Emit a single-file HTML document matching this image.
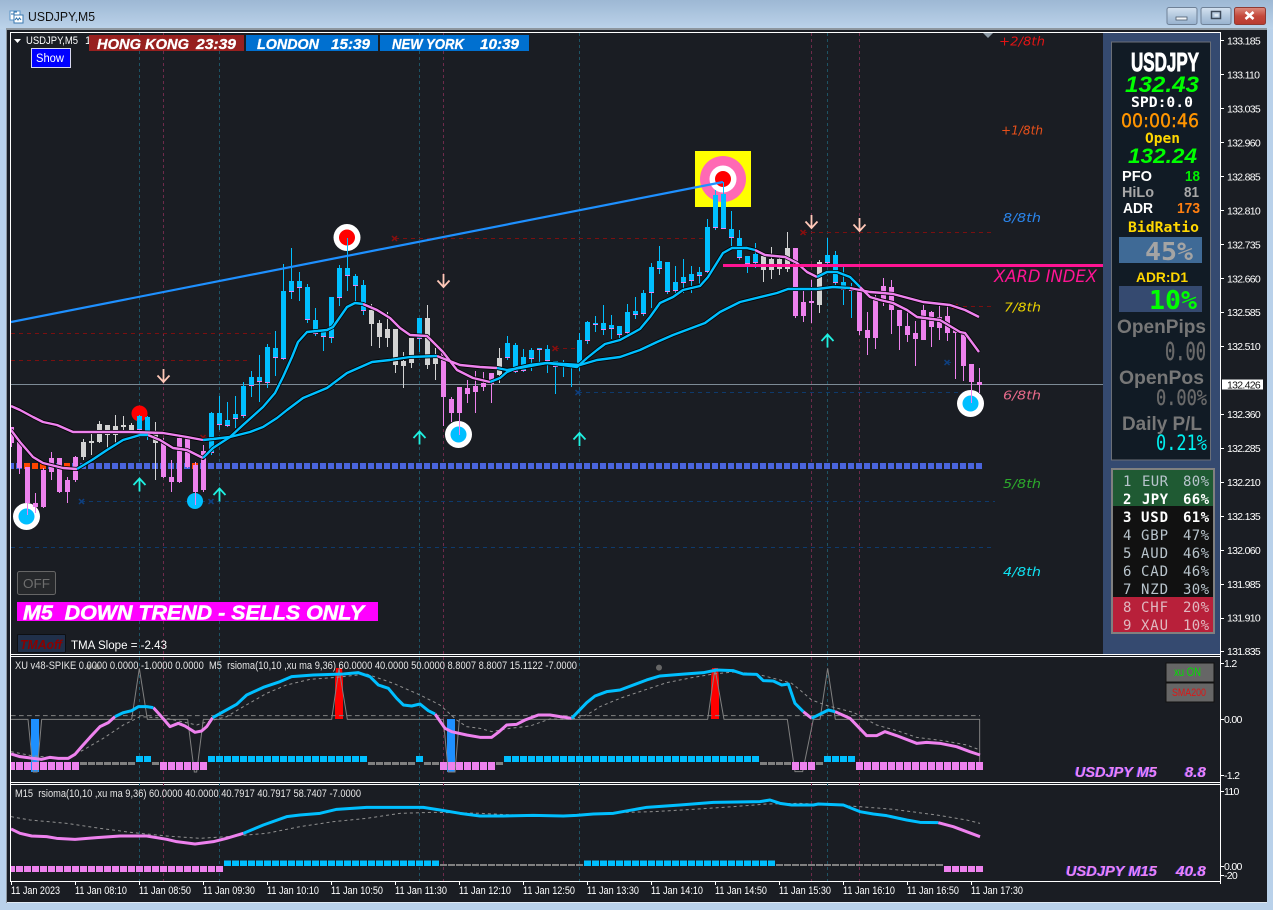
<!DOCTYPE html>
<html><head><meta charset="utf-8"><title>USDJPY,M5</title>
<style>
html,body{margin:0;padding:0;background:#b9d1ea;overflow:hidden}
svg{display:block}
text{font-family:"Liberation Sans",sans-serif;white-space:pre}
.ax{font-size:11px;fill:#fff}
.ay{font-size:10.5px;fill:#fff;letter-spacing:-.7px}
.mono{font-family:"DejaVu Sans Mono","Liberation Mono",monospace}
.dj{font-family:"DejaVu Sans",sans-serif}
.bi{font-weight:bold;font-style:italic}
.b{font-weight:bold}
.lv{font-family:"DejaVu Sans",sans-serif;font-style:italic;font-size:12.5px}
.cu{font-family:"DejaVu Sans Mono","Liberation Mono",monospace;font-size:14px;fill:#b8c4cc}
.cb{font-family:"DejaVu Sans Mono","Liberation Mono",monospace;font-size:14px;fill:#fff;font-weight:bold}
.vio{font-weight:bold;font-style:italic;font-size:15px;fill:#ee82ee;filter:drop-shadow(-1px 0 0 #3a3ae0)}
</style></head><body>
<svg xmlns="http://www.w3.org/2000/svg" width="1273" height="910" viewBox="0 0 1273 910">
<defs>
<linearGradient id="tb" x1="0" y1="0" x2="0" y2="1"><stop offset="0" stop-color="#9db8d4"/><stop offset="1" stop-color="#bcd3ea"/></linearGradient>
<linearGradient id="wb" x1="0" y1="0" x2="0" y2="1"><stop offset="0" stop-color="#d5e2f0"/><stop offset=".5" stop-color="#b3c8de"/><stop offset="1" stop-color="#98b2cf"/></linearGradient>
<linearGradient id="wr" x1="0" y1="0" x2="0" y2="1"><stop offset="0" stop-color="#dd8d80"/><stop offset=".5" stop-color="#c4493c"/><stop offset="1" stop-color="#b83a30"/></linearGradient>
<clipPath id="cp"><rect x="11" y="33" width="1209" height="848"/></clipPath>
</defs>

<!-- window frame -->
<rect width="1273" height="910" fill="#b9d1ea"/>
<rect width="1273" height="29" fill="url(#tb)"/>
<rect x="6" y="28" width="1261" height="875" fill="#8e979f"/>
<rect x="7" y="30" width="1260" height="872" fill="#1a1d23"/>
<rect x="7" y="902" width="1260" height="1" fill="#dfe9f3"/>
<!-- title icon -->
<rect x="10" y="11" width="10" height="9" fill="#fff" stroke="#5a95c8"/>
<rect x="14" y="15" width="9" height="8" fill="#fff" stroke="#3a78b0"/>
<path d="M11 14h3v-2h3M15 20l1.5-2 1.5 2 1.5-2 1.5 2" fill="none" stroke="#2a6ea8"/>
<text x="28" y="21" style="font-size:12.5px" fill="#111" textLength="67" lengthAdjust="spacingAndGlyphs">USDJPY,M5</text>
<!-- window buttons -->
<rect x="1167" y="7.5" width="30" height="17" rx="2" fill="url(#wb)" stroke="#6f8197"/>
<rect x="1176" y="17" width="11" height="3" fill="#f2f5f8" stroke="#4a5a6c" stroke-width=".8"/>
<rect x="1201" y="7.5" width="30" height="17" rx="2" fill="url(#wb)" stroke="#6f8197"/>
<rect x="1211.5" y="11.5" width="9" height="7" fill="none" stroke="#3d4a5a" stroke-width="1.5"/>
<rect x="1214.5" y="14" width="4" height="2.5" fill="#dfe8f1"/>
<rect x="1234.5" y="7.5" width="31" height="17" rx="2" fill="url(#wr)" stroke="#8f3a32"/>
<path d="M1245.5 12l8 7M1253.5 12l-8 7" stroke="#fff" stroke-width="2.6"/>

<!-- frames -->
<path d="M10.5 32V881.5M10 32.500H1221M1220.5 32V884M10 654.5H1221M10 656.5H1221M10 782.5H1221M10 784.5H1221M10 881.5H1221" stroke="#fff" fill="none"/>

<g clip-path="url(#cp)">
<!-- vertical separators -->
<path d="M139.5 33V881M219.5 33V881M419.5 33V881M579.5 33V881M827.5 33V881" stroke="#1d5364" stroke-dasharray="3 3"/>
<path d="M163.5 33V881M443.5 33V881M811.5 33V881M859.5 33V881" stroke="#6d2a4a" stroke-dasharray="3 3"/>

<!-- levels -->
<path d="M395 238.5H706M803 232.5H992M955 306.5H993M555 348.5H580M11 333.5H276M11 360.5H250M203 437.5H215" stroke="#7a1010" stroke-dasharray="4 4" fill="none"/>
<path d="M578 392.5H975M81 501.5H995M11 547.5H993M947 362.5H955" stroke="#0e3a6c" stroke-dasharray="4 4" fill="none"/>
<path d="M392 236l5 5M397 236l-5 5M800.5 230l5 5M805.5 230l-5 5M952.5 304l5 5M957.5 304l-5 5M552.5 346l5 5M557.5 346l-5 5M200.5 435l5 5M205.5 435l-5 5" stroke="#8b0e0e" stroke-width="1.5"/>
<path d="M79 499l5 5M84 499l-5 5M208.5 499l5 5M213.5 499l-5 5M575.5 390l5 5M580.5 390l-5 5M944.5 360l5 5M949.5 360l-5 5" stroke="#0e3f80" stroke-width="1.5"/>

<!-- price line -->
<path d="M11 384.5H1220" stroke="#7d8b96"/>

<!-- blue dotted -->
<path d="M8 466H983" stroke="#4a64dc" stroke-width="6" stroke-dasharray="6 2"/>
<path d="M24 466H46M64 466H70M192 466H198" stroke="#ff4500" stroke-width="6" stroke-dasharray="6 2"/>

<!-- target and rings -->
<rect x="695" y="151" width="56" height="56" fill="#ffff00"/>
<circle cx="723" cy="179" r="23" fill="#ff69b4"/>
<circle cx="723" cy="179" r="13.5" fill="#fff"/>
<circle cx="723" cy="179" r="8" fill="#f00"/>
<circle cx="347" cy="237.5" r="13.5" fill="#fff"/><circle cx="347" cy="237.5" r="8" fill="#f00"/>
<circle cx="458.5" cy="434.5" r="13.5" fill="#fff"/><circle cx="458.5" cy="434.5" r="8" fill="#00bfff"/>
<circle cx="970.5" cy="403.5" r="13.5" fill="#fff"/><circle cx="970.5" cy="403.5" r="8" fill="#00bfff"/>
<circle cx="26.5" cy="516.5" r="13.5" fill="#fff"/><circle cx="26.5" cy="516.5" r="8" fill="#00bfff"/>
<circle cx="195" cy="501" r="8" fill="#00bfff"/>
<circle cx="139.5" cy="413.5" r="8" fill="#f00"/>

<!-- blue candles -->
<path fill="none" stroke="#00bfff" d="M139.5 415V431M147.5 416V440M211.5 412V455M219.5 396V430M227.5 402V427M235.5 396V428M243.5 382V418M251.5 371V397M259.5 355V402M267.5 344V388M275.5 331V376M283.5 264V360M291.5 248V299M299.5 272V301M307.5 284V323M315.5 308V336M323.5 330V351M331.5 297V343M339.5 265V306M347.5 238V291M355.5 274V303M363.5 280V315M419.5 318V352M507.5 336V360M515.5 343V373M523.5 349V372M531.5 348V371M539.5 348V365M547.5 345V373M555.5 361V394M563.5 360V377M571.5 364V387M579.5 333V371M587.5 321V344M595.5 316V332M603.5 305V335M611.5 315V339M619.5 326V341M627.5 304V335M635.5 297V319M643.5 290V316M651.5 263V308M659.5 246V274M667.5 262V294M675.5 266V296M683.5 259V293M691.5 266V293M699.5 267V286M707.5 219V273M715.5 190V230M723.5 182V229M731.5 211V247M739.5 230V260M747.5 256V273M755.5 243V268M827.5 238V266M835.5 251V285M843.5 265V305M851.5 283V318"/>
<path fill="none" stroke="#00bfff" stroke-width="5" d="M139.5 416V430M147.5 417V432M211.5 413V453M219.5 413V425M227.5 420V426M235.5 414V419M243.5 386V416M251.5 377V386M259.5 377V382M267.5 347V383M275.5 348V358M283.5 291V359M291.5 281V292M299.5 281V288M307.5 287V320M315.5 320V334M323.5 331V337M331.5 297V338M339.5 268V298M347.5 268V276M355.5 276V286M363.5 285V311M419.5 318V339M507.5 343V358M515.5 345V372M523.5 357V371M531.5 350V359M539.5 348V350M547.5 349V361M555.5 361V367M563.5 365V366M571.5 364V366M579.5 340V365M587.5 322V341M595.5 323V325M603.5 323V330M611.5 325V329M619.5 326V335M627.5 312V333M635.5 311V315M643.5 293V314M651.5 267V293M659.5 261V269M667.5 262V292M675.5 282V291M683.5 277V283M691.5 274V281M699.5 272V276M707.5 227V272M715.5 195V228M723.5 194V229M731.5 229V238M739.5 238V258M747.5 256V264M755.5 254V263M827.5 255V263M835.5 255V283M843.5 282V290M851.5 289V291"/>
<path fill="none" stroke="#ee82ee" d="M137 429.5h5M145 431.5h5M209 452.5h5M217 424.5h5M225 425.5h5M233 418.5h5M241 415.5h5M249 385.5h5M257 381.5h5M265 382.5h5M273 357.5h5M281 358.5h5M289 291.5h5M297 287.5h5M305 319.5h5M313 333.5h5M321 336.5h5M329 337.5h5M337 297.5h5M345 275.5h5M353 285.5h5M361 310.5h5M417 338.5h5M505 357.5h5M513 371.5h5M521 370.5h5M529 358.5h5M537 349.5h5M545 360.5h5M553 366.5h5M561 365.5h5M569 365.5h5M577 364.5h5M585 340.5h5M593 324.5h5M601 329.5h5M609 328.5h5M617 334.5h5M625 332.5h5M633 314.5h5M641 313.5h5M649 292.5h5M657 268.5h5M665 291.5h5M673 290.5h5M681 282.5h5M689 280.5h5M697 275.5h5M705 271.5h5M713 227.5h5M721 228.5h5M729 237.5h5M737 257.5h5M745 263.5h5M753 262.5h5M825 262.5h5M833 282.5h5M841 289.5h5M849 290.5h5"/>

<!-- gray candles -->
<path fill="none" stroke="#d3d3d3" d="M83.5 439V460M91.5 432V455M99.5 421V443M107.5 425V448M115.5 415V443M123.5 416V432M131.5 423V433M155.5 422V480M371.5 304V346M379.5 320V348M387.5 312V347M395.5 329V373M403.5 352V388M411.5 338V368M427.5 305V369M435.5 348V380M499.5 348V383M763.5 256V282M771.5 247V279M779.5 255V275M787.5 232V272M819.5 260V313"/>
<path fill="none" stroke="#d3d3d3" stroke-width="5" d="M83.5 442V457M91.5 441V443M99.5 424V442M107.5 425V435M115.5 426V435M123.5 425V427M131.5 425V432M155.5 432V443M371.5 310V324M379.5 323V337M387.5 329V338M395.5 329V365M403.5 361V366M411.5 338V363M427.5 318V365M435.5 358V364M499.5 358V375M763.5 256V270M771.5 259V270M779.5 259V269M787.5 248V269M819.5 262V305"/>

<!-- pink candles -->
<path fill="none" stroke="#ee82ee" d="M11.5 427V447M19.5 442V474M27.5 467V515M35.5 493V513M43.5 468V508M51.5 452V480M59.5 458V493M67.5 477V503M75.5 456V482M163.5 438V478M171.5 460V492M179.5 437V483M187.5 437V468M195.5 462V505M203.5 445V492M443.5 350V426M451.5 397V422M459.5 387V435M467.5 380V403M475.5 371V413M483.5 372V391M491.5 373V403M795.5 248V318M803.5 290V322M811.5 280V323M859.5 291V335M867.5 312V355M875.5 295V349M883.5 278V306M891.5 280V334M899.5 310V350M907.5 310V342M915.5 321V366M923.5 305V340M931.5 311V347M939.5 306V340M947.5 305V341M955.5 328V379M963.5 331V381M971.5 364V403M979.5 368V393"/>
<path fill="none" stroke="#ee82ee" stroke-width="5" d="M11.5 427V443M19.5 442V468M27.5 467V503M35.5 503V507M43.5 470V507M51.5 458V472M59.5 458V492M67.5 480V492M75.5 457V480M163.5 443V477M171.5 477V482M179.5 438V482M187.5 438V467M195.5 465V492M203.5 451V490M443.5 352V397M451.5 399V413M459.5 387V413M467.5 388V394M475.5 386V392M483.5 383V387M491.5 373V384M795.5 248V316M803.5 302V316M811.5 301V303M859.5 291V331M867.5 330V338M875.5 299V338M883.5 286V302M891.5 287V310M899.5 310V326M907.5 326V335M915.5 333V339M923.5 310V340M931.5 312V327M939.5 317V328M947.5 316V333M955.5 330V333M963.5 331V366M971.5 364V382M979.5 382V385"/>

<!-- MA casing -->
<g fill="none" stroke="#000" stroke-width="4" stroke-linejoin="round">
<polyline points="11,430 20,442 33,457 43,463 63,468 77,469 92,460 107,450 123,440 140,435 148,435 160,440 173,448 187,450 203,458 213,448 230,437 243,425 263,407 275,393 283,377 292,357 298,342 307,332 327,330 333,327 347,307 355,303 363,304 377,310 390,318 400,328 410,335 427,336 443,352 457,370 473,378 490,382 500,378 507,372 517,368 530,365 547,363 563,365 577,367 587,358 597,350 605,344 620,340 640,329 650,317 660,303 673,297 683,290 700,286 708,277 723,253 732,248 747,248 755,250 765,255 785,257 797,263 807,272 817,277 827,272 837,272 850,277 860,287 870,297 880,300 893,303 907,310 917,317 940,320 960,332 965,333 979,352"/>
<polyline points="11,406 20,410 33,417 43,422 57,425 73,432 100,432 131,432 163,433 187,437 203,440 213,439 230,437 250,432 263,427 277,418 287,410 303,398 327,388 347,373 372,362 390,360 410,357 437,356 447,360 460,365 480,367 497,368 507,370 520,368 547,363 580,365 597,360 620,357 640,350 657,342 673,335 705,323 720,312 740,302 777,293 788,289 817,289 833,287 850,288 860,290 870,292 883,293 893,294 923,302 950,305 965,310 979,317"/>
</g>
<!-- MA colours -->
<g fill="none" stroke="#ee82ee" stroke-width="2.4" stroke-linejoin="round">
<polyline points="11,430 20,442 33,457 43,463 63,468 77,469"/>
<polyline points="148,435 160,440 173,448 187,450 203,458"/>
<polyline points="363,304 377,310 390,318 400,328 410,335 427,336 443,352 457,370 473,378 490,382"/>
<polyline points="755,250 765,255 785,257 797,263 807,272 817,277"/>
<polyline points="860,287 870,297 880,300 893,303 907,310 917,317 940,320 960,332 965,333 979,352"/>
<polyline points="11,406 20,410 33,417 43,422 57,425 73,432 100,432 131,432 163,433 187,437 203,440"/>
<polyline points="437,356 447,360 460,365 480,367 497,368"/>
<polyline points="850,288 860,290 870,292 883,293 893,294 923,302 950,305 965,310 979,317"/>
</g>
<g fill="none" stroke="#00bfff" stroke-width="2.4" stroke-linejoin="round">
<polyline points="77,469 92,460 107,450 123,440 140,435 148,435"/>
<polyline points="203,458 213,448 230,437 243,425 263,407 275,393 283,377 292,357 298,342 307,332 327,330 333,327 347,307 355,303 363,304"/>
<polyline points="490,382 500,378 507,372 517,368 530,365 547,363 563,365 577,367 587,358 597,350 605,344 620,340 640,329 650,317 660,303 673,297 683,290 700,286 708,277 723,253 732,248 747,248 755,250"/>
<polyline points="817,277 827,272 837,272 850,277 860,287"/>
<polyline points="203,440 213,439 230,437 250,432 263,427 277,418 287,410 303,398 327,388 347,373 372,362 390,360 410,357 437,356"/>
<polyline points="497,368 507,370 520,368 547,363 580,365 597,360 620,357 640,350 657,342 673,335 705,323 720,312 740,302 777,293 788,289 817,289 833,287 850,288"/>
</g>

<!-- pink XARD line + trend -->
<path d="M723 265.5H1103" stroke="#ff1493" stroke-width="3"/>
<path d="M11 322L723 182" stroke="#1e90ff" stroke-width="2.2"/>

<!-- arrows -->
<g fill="none" stroke="#1ff0e0" stroke-width="1.8">
<path d="M133.5 485L139.5 478.5L145.5 485M139.5 479V491.5"/>
<path d="M213.5 495L219.5 488.5L225.5 495M219.5 489V501.5"/>
<path d="M413.5 438L419.5 431.5L425.5 438M419.5 432V444.5"/>
<path d="M573.5 439.5L579.5 433L585.5 439.5M579.5 433.5V446"/>
<path d="M821.5 341L827.5 334.5L833.5 341M827.5 335V347.5"/>
</g>
<g fill="none" stroke="#ffc8b8" stroke-width="1.8">
<path d="M157.5 375.5L163.5 382L169.5 375.5M163.5 381.5V369"/>
<path d="M437.5 280.5L443.5 287L449.5 280.5M443.5 286.5V274"/>
<path d="M805.5 221.5L811.5 228L817.5 221.5M811.5 227.5V215"/>
<path d="M853.5 224.5L859.5 231L865.5 224.5M859.5 230.5V218"/>
</g>
<path d="M983 33h10l-5 5z" fill="#8e9ba6"/>

<!-- sub 1 -->
<path d="M31 719h8v53h-8zM447 719h8v53h-8z" fill="#1e90ff"/>
<path d="M335 719V680L336 668H342L343 680V719zM711 719V680L712 668H718L719 680V719z" fill="#f00"/>
<g transform="scale(.33333)" fill="none">
<path d="M33 2147H2940" stroke="#808080" stroke-width="3" stroke-dasharray="14 10"/>
<path d="M33 2158H84L100 2316H111L125 2158H395L418 2005L442 2158H563L583 2316H590L610 2158H995L1017 2005L1042 2158H1330L1345 2316H1365L1378 2158H2123L2145 2005L2172 2158H2362L2385 2315H2408L2440 2158H2460L2483 2005L2506 2158H2939V2310" stroke="#808080" stroke-width="3"/>
<circle cx="267" cy="2001" r="9" fill="#555"/><circle cx="291" cy="2001" r="9" fill="#555"/><circle cx="1977" cy="2003" r="9" fill="#666"/>
<g transform="translate(0 1950)">
<polyline stroke="#909090" stroke-width="3" stroke-dasharray="9 9" points="33,305 100,318 200,325 250,300 310,265 370,225 420,200 500,205 590,225 640,210 680,200 730,170 800,130 860,105 930,88 1010,82 1100,72 1180,100 1260,135 1320,165 1370,210 1400,230 1440,235 1475,245 1530,235 1590,228 1650,207 1715,208 1760,195 1800,170 1860,145 1940,118 2000,98 2080,82 2140,72 2200,66 2270,72 2340,90 2375,100 2400,120 2435,150 2485,168 2560,187 2630,225 2700,245 2750,262 2830,272 2900,285 2940,300"/>
<g stroke="#ee82ee" stroke-width="9" stroke-linejoin="round">
<polyline points="33,312 60,320 100,325 125,328 150,322 175,325 205,325 225,313 245,290 270,262 300,230 325,218 345,200"/>
<polyline points="460,173 480,195 510,230 535,220 555,228 585,247 605,243 620,230 638,203"/>
<polyline points="1305,192 1335,235 1355,245 1400,255 1440,262 1475,262 1495,247 1520,225 1550,223 1575,210 1615,195 1650,195 1680,200 1715,205"/>
<polyline points="2410,185 2435,205"/>
<polyline points="2505,185 2550,205 2600,257 2630,257 2655,245 2690,257 2750,280 2780,277 2820,280 2870,290 2910,305 2940,315"/>
</g>
<g stroke="#00bfff" stroke-width="9" stroke-linejoin="round">
<polyline points="345,200 370,188 395,182 415,170 440,170 460,173"/>
<polyline points="638,203 670,185 710,163 740,135 790,112 840,95 875,80 940,75 1030,72 1075,68 1110,80 1135,105 1165,115 1190,145 1210,165 1235,168 1260,162 1285,182 1305,192"/>
<polyline points="1715,205 1760,158 1785,138 1820,125 1860,120 1940,90 1980,78 2040,73 2110,68 2150,60 2200,62 2230,72 2270,73 2290,92 2320,93 2345,105 2365,102 2385,160 2410,185"/>
<polyline points="2435,205 2485,180 2505,185"/>
</g>
</g>
</g>
<path d="M8 766H79M160 766H207M440 766H495M792 766H815M856 766H983" stroke="#ee82ee" stroke-width="8" stroke-dasharray="7 1" fill="none"/>
<path d="M136 759H151M208 759H367M416 759H423M504 759H759M824 759H855" stroke="#00bfff" stroke-width="6" stroke-dasharray="7 1" fill="none"/>
<path d="M80 763.5H135M152 763.5H159M368 763.5H415M424 763.5H439M496 763.5H503M760 763.5H791M816 763.5H823" stroke="#808080" stroke-width="3" stroke-dasharray="7 1" fill="none"/>

<!-- sub 2 -->
<g transform="translate(0 650) scale(.33333)" fill="none">
<polyline stroke="#909090" stroke-width="3" stroke-dasharray="9 9" points="33,500 90,510 200,520 300,535 400,548 500,558 600,565 680,560 800,550 900,530 1000,515 1100,505 1200,490 1300,487 1440,490 1540,495 1740,495 1840,488 1960,485 2080,478 2200,470 2300,462 2400,460 2580,470 2680,478 2810,495 2900,510 2940,520"/>
<polyline stroke="#ee82ee" stroke-width="9" stroke-linejoin="round" points="33,537 60,550 95,558 140,560 170,565 225,568 290,563 360,558 440,558 500,568 530,575 585,582 640,575 680,565 730,550"/>
<polyline stroke="#00bfff" stroke-width="9" stroke-linejoin="round" points="730,550 790,525 860,500 900,495 960,490 1010,478 1100,472 1270,472 1320,480 1380,490 1440,498 1510,498 1600,496 1690,498 1730,496 1780,492 1840,490 1940,472 2040,465 2140,457 2280,455 2310,450 2340,460 2375,465 2440,465 2455,462 2530,465 2580,485 2620,492 2660,497 2720,510 2760,517 2815,518"/>
<polyline stroke="#ee82ee" stroke-width="9" stroke-linejoin="round" points="2815,518 2860,530 2940,560"/>
</g>
<path d="M8 869H223M944 869H983" stroke="#ee82ee" stroke-width="6" stroke-dasharray="7 1" fill="none"/>
<path d="M224 863.3H439M584 863.3H775" stroke="#00bfff" stroke-width="5.5" stroke-dasharray="7 1" fill="none"/>
<path d="M440 865H583M776 865H943" stroke="#808080" stroke-width="2" stroke-dasharray="7 1" fill="none"/>
</g>

<!-- chart text -->
<path d="M14 39h7l-3.500 4z" fill="#fff"/>
<text class="ax" x="26" y="44" textLength="52" lengthAdjust="spacingAndGlyphs">USDJPY,M5</text>
<text class="ax" x="85" y="44">1</text>
<rect x="89" y="35" width="155" height="16" fill="#97201f"/>
<rect x="246" y="35" width="132" height="16" fill="#0070d0"/>
<rect x="380" y="35" width="149" height="16" fill="#0070d0"/>
<g fill="#fff" stroke="#fff" stroke-width=".3" style="font-size:14.5px;font-weight:bold;font-style:italic">
<text x="97" y="49" textLength="92" lengthAdjust="spacingAndGlyphs">HONG KONG</text>
<text x="196" y="49" textLength="40" lengthAdjust="spacingAndGlyphs">23:39</text>
<text x="257" y="49" textLength="62" lengthAdjust="spacingAndGlyphs">LONDON</text>
<text x="331" y="49" textLength="39" lengthAdjust="spacingAndGlyphs">15:39</text>
<text x="392" y="49" textLength="72" lengthAdjust="spacingAndGlyphs">NEW YORK</text>
<text x="480" y="49" textLength="39" lengthAdjust="spacingAndGlyphs">10:39</text>
</g>
<rect x="31.5" y="48.5" width="39" height="19" fill="#0000ff" stroke="#d8d8f0"/>
<text x="36" y="62" fill="#fff" style="font-size:11.5px" textLength="28" lengthAdjust="spacingAndGlyphs">Show</text>

<text class="lv" x="999" y="45.5" fill="#e01515" textLength="46" lengthAdjust="spacingAndGlyphs">+2/8th</text>
<text class="lv" x="1001" y="134.5" fill="#e8501a" textLength="42" lengthAdjust="spacingAndGlyphs">+1/8th</text>
<text class="lv" x="1003" y="222" fill="#2a84ea" textLength="38" lengthAdjust="spacingAndGlyphs">8/8th</text>
<text class="lv" x="1004" y="311.5" fill="#e8d000" textLength="37" lengthAdjust="spacingAndGlyphs">7/8th</text>
<text class="lv" x="1003" y="399.5" fill="#e86a8a" textLength="38" lengthAdjust="spacingAndGlyphs">6/8th</text>
<text class="lv" x="1003" y="488" fill="#2ca82c" textLength="38" lengthAdjust="spacingAndGlyphs">5/8th</text>
<text class="lv" x="1003" y="576" fill="#10e0f0" textLength="38" lengthAdjust="spacingAndGlyphs">4/8th</text>
<text class="dj" x="994" y="282" fill="#ff1493" style="font-size:16.5px;font-style:italic" textLength="103" lengthAdjust="spacingAndGlyphs">XARD INDEX</text>

<rect x="17.5" y="571.5" width="38" height="23" rx="2" fill="#26282b" stroke="#666"/>
<text x="23" y="588" fill="#6e6e6e" style="font-size:13px" textLength="27" lengthAdjust="spacingAndGlyphs">OFF</text>
<rect x="17" y="602" width="361" height="19" fill="#ff00ff"/>
<text x="23" y="619.5" fill="#fff" stroke="#fff" stroke-width=".5" class="bi" style="font-size:20px" textLength="341" lengthAdjust="spacingAndGlyphs">M5  DOWN TREND - SELLS ONLY</text>
<rect x="17.5" y="634.5" width="48" height="18" rx="1" fill="#20304a" stroke="#0d0f12"/>
<text x="20" y="649" fill="#8b0000" class="bi" style="font-size:12.5px" textLength="42" lengthAdjust="spacingAndGlyphs">TMAoff</text>
<text x="71" y="649" fill="#fff" style="font-size:11.5px" textLength="96" lengthAdjust="spacingAndGlyphs">TMA Slope = -2.43</text>

<!-- right panel -->
<rect x="1103" y="33" width="117" height="621" fill="#354a70"/>
<rect x="1111.5" y="42" width="99" height="418" fill="#111b25" stroke="#6a6f78"/>
<text x="1131" y="71" fill="#fff" stroke="#fff" stroke-width=".9" class="b" style="font-size:26px" textLength="68" lengthAdjust="spacingAndGlyphs">USDJPY</text>
<text x="1125" y="92" fill="#00ff00" class="bi" style="font-size:22px" textLength="74" lengthAdjust="spacingAndGlyphs">132.43</text>
<text class="mono" x="1131" y="107" fill="#fff" style="font-size:14px;font-weight:bold" textLength="62" lengthAdjust="spacingAndGlyphs">SPD:0.0</text>
<text class="dj" x="1121" y="127" fill="#ff9500" stroke="#ff9500" stroke-width=".4" style="font-size:19px" textLength="78" lengthAdjust="spacingAndGlyphs">00:00:46</text>
<text class="mono" x="1145" y="143" fill="#ffd700" style="font-size:14px;font-weight:bold" textLength="35" lengthAdjust="spacingAndGlyphs">Open</text>
<text x="1128" y="163" fill="#00ff00" class="bi" style="font-size:21px" textLength="69" lengthAdjust="spacingAndGlyphs">132.24</text>
<text x="1122" y="181" fill="#fff" style="font-size:15px;font-weight:bold" textLength="30" lengthAdjust="spacingAndGlyphs">PFO</text>
<text x="1185" y="181" fill="#00ee00" style="font-size:15px;font-weight:bold" textLength="15" lengthAdjust="spacingAndGlyphs">18</text>
<text x="1122" y="197" fill="#a8a8a8" style="font-size:15px;font-weight:bold" textLength="32" lengthAdjust="spacingAndGlyphs">HiLo</text>
<text x="1184" y="197" fill="#a8a8a8" style="font-size:15px;font-weight:bold" textLength="15" lengthAdjust="spacingAndGlyphs">81</text>
<text x="1123" y="213" fill="#fff" style="font-size:15px;font-weight:bold" textLength="30" lengthAdjust="spacingAndGlyphs">ADR</text>
<text x="1177" y="213" fill="#ff7f10" style="font-size:15px;font-weight:bold" textLength="23" lengthAdjust="spacingAndGlyphs">173</text>
<text class="mono" x="1128" y="232" fill="#ffd700" style="font-size:14px;font-weight:bold" textLength="71" lengthAdjust="spacingAndGlyphs">BidRatio</text>
<rect x="1119" y="237" width="83" height="26" fill="#3f6a96"/>
<text class="mono" x="1145" y="260" fill="#a4a4a4" style="font-size:25px;font-weight:bold" textLength="48" lengthAdjust="spacingAndGlyphs">45%</text>
<text x="1136" y="282" fill="#ffd700" class="b" style="font-size:14px" textLength="52" lengthAdjust="spacingAndGlyphs">ADR:D1</text>
<rect x="1119" y="286" width="83" height="26" fill="#354a70"/>
<text class="mono" x="1149" y="309" fill="#00ff00" style="font-size:26px;font-weight:bold" textLength="48" lengthAdjust="spacingAndGlyphs">10%</text>
<text x="1117" y="333" fill="#777" class="b" style="font-size:19px" textLength="89" lengthAdjust="spacingAndGlyphs">OpenPips</text>
<text class="mono" x="1165" y="360" fill="#6a6a6a" stroke="#6a6a6a" stroke-width=".4" style="font-size:25px" textLength="41" lengthAdjust="spacingAndGlyphs">0.00</text>
<text x="1119" y="384" fill="#777" class="b" style="font-size:19px" textLength="85" lengthAdjust="spacingAndGlyphs">OpenPos</text>
<text class="mono" x="1156" y="405" fill="#6a6a6a" stroke="#6a6a6a" stroke-width=".3" style="font-size:21px" textLength="51" lengthAdjust="spacingAndGlyphs">0.00%</text>
<text x="1122" y="430" fill="#777" class="b" style="font-size:19px" textLength="80" lengthAdjust="spacingAndGlyphs">Daily P/L</text>
<text class="mono" x="1156" y="450" fill="#00f0f0" style="font-size:21px" textLength="51" lengthAdjust="spacingAndGlyphs">0.21%</text>

<!-- currency table -->
<rect x="1112" y="469" width="102" height="164" fill="#111" stroke="#808080" stroke-width="2"/>
<rect x="1113" y="470" width="100" height="36" fill="#1f5a33"/>
<rect x="1113" y="597" width="100" height="35" fill="#b8203a"/>
<g>
<text class="cu" x="1123" y="486">1</text><text class="cu" x="1142" y="486" textLength="26">EUR</text><text class="cu" x="1183" y="486" textLength="26">80%</text>
<text class="cb" x="1123" y="504">2</text><text class="cb" x="1142" y="504" textLength="26">JPY</text><text class="cb" x="1183" y="504" textLength="26">66%</text>
<text class="cb" x="1123" y="522">3</text><text class="cb" x="1141" y="522" textLength="27">USD</text><text class="cb" x="1183" y="522" textLength="26">61%</text>
<text class="cu" x="1123" y="540">4</text><text class="cu" x="1141" y="540" textLength="27">GBP</text><text class="cu" x="1183" y="540" textLength="26">47%</text>
<text class="cu" x="1123" y="558">5</text><text class="cu" x="1141" y="558" textLength="27">AUD</text><text class="cu" x="1183" y="558" textLength="26">46%</text>
<text class="cu" x="1123" y="576">6</text><text class="cu" x="1141" y="576" textLength="27">CAD</text><text class="cu" x="1183" y="576" textLength="26">46%</text>
<text class="cu" x="1123" y="594">7</text><text class="cu" x="1141" y="594" textLength="27">NZD</text><text class="cu" x="1183" y="594" textLength="26">30%</text>
<text class="cu" x="1123" y="612" style="fill:#e0b8c0">8</text><text class="cu" x="1141" y="612" textLength="27" style="fill:#e0b8c0">CHF</text><text class="cu" x="1183" y="612" textLength="26" style="fill:#e0b8c0">20%</text>
<text class="cu" x="1123" y="630" style="fill:#e0b8c0">9</text><text class="cu" x="1141" y="630" textLength="27" style="fill:#e0b8c0">XAU</text><text class="cu" x="1183" y="630" textLength="26" style="fill:#e0b8c0">10%</text>
</g>

<!-- sub labels -->
<text x="15" y="669" fill="#e6e6e6" style="font-size:11px" textLength="562" lengthAdjust="spacingAndGlyphs">XU v48-SPIKE 0.0000 0.0000 -1.0000 0.0000  M5  rsioma(10,10 ,xu ma 9,36) 60.0000 40.0000 50.0000 8.8007 8.8007 15.1122 -7.0000</text>
<text x="15" y="797" fill="#e6e6e6" style="font-size:11px" textLength="346" lengthAdjust="spacingAndGlyphs">M15  rsioma(10,10 ,xu ma 9,36) 60.0000 40.0000 40.7917 40.7917 58.7407 -7.0000</text>
<rect x="1166" y="663" width="48" height="19" fill="#666" stroke="#111"/>
<text x="1174" y="676" fill="#00e000" style="font-size:11.5px" textLength="27" lengthAdjust="spacingAndGlyphs">xu ON</text>
<rect x="1166" y="683" width="48" height="19" fill="#666" stroke="#111"/>
<text x="1172" y="696" fill="#e01515" style="font-size:11px" textLength="34" lengthAdjust="spacingAndGlyphs">SMA200</text>
<text class="vio" x="1075" y="777" textLength="82" lengthAdjust="spacingAndGlyphs">USDJPY M5</text>
<text class="vio" x="1185" y="777" textLength="21" lengthAdjust="spacingAndGlyphs">8.8</text>
<text class="vio" x="1066" y="876" textLength="91" lengthAdjust="spacingAndGlyphs">USDJPY M15</text>
<text class="vio" x="1176" y="876" textLength="30" lengthAdjust="spacingAndGlyphs">40.8</text>

<!-- right axis -->
<path fill="none" stroke="#fff" d="M1221 40.5h3M1221 74.5h3M1221 108.5h3M1221 142.5h3M1221 176.5h3M1221 210.5h3M1221 244.5h3M1221 278.5h3M1221 312.5h3M1221 346.5h3M1221 414.5h3M1221 448.5h3M1221 482.5h3M1221 516.5h3M1221 550.5h3M1221 584.5h3M1221 618.5h3M1221 651.5h3M1221 663.5h3M1221 719.5h3M1221 775.5h3M1221 791.5h3M1221 866.5h3M1221 875.5h3"/>
<text class="ay" x="1227" y="44.5">133.185</text>
<text class="ay" x="1227" y="78.5">133.110</text>
<text class="ay" x="1227" y="112.5">133.035</text>
<text class="ay" x="1227" y="146.5">132.960</text>
<text class="ay" x="1227" y="180.5">132.885</text>
<text class="ay" x="1227" y="214.5">132.810</text>
<text class="ay" x="1227" y="248.5">132.735</text>
<text class="ay" x="1227" y="282.5">132.660</text>
<text class="ay" x="1227" y="316">132.585</text>
<text class="ay" x="1227" y="350">132.510</text>
<text class="ay" x="1227" y="418">132.360</text>
<text class="ay" x="1227" y="452">132.285</text>
<text class="ay" x="1227" y="486">132.210</text>
<text class="ay" x="1227" y="520">132.135</text>
<text class="ay" x="1227" y="554">132.060</text>
<text class="ay" x="1227" y="588">131.985</text>
<text class="ay" x="1227" y="621.5">131.910</text>
<text class="ay" x="1227" y="655">131.835</text>
<rect x="1222" y="379.5" width="41" height="10" fill="#fff"/>
<text x="1227" y="388.5" fill="#111" style="font-size:10.5px;letter-spacing:-.7px">132.426</text>
<text class="ay" x="1224" y="667">1.2</text>
<text class="ay" x="1224" y="723">0.00</text>
<text class="ay" x="1224" y="779">-1.2</text>
<text class="ay" x="1224" y="795">110</text>
<text class="ay" x="1224" y="870">0.00</text>
<text class="ay" x="1224" y="879">-20</text>

<!-- time axis -->
<path fill="none" stroke="#fff" d="M11.5 881v4M75.5 881v4M139.5 881v4M203.5 881v4M267.5 881v4M331.5 881v4M395.5 881v4M459.5 881v4M523.5 881v4M587.5 881v4M651.5 881v4M715.5 881v4M779.5 881v4M843.5 881v4M907.5 881v4M971.5 881v4"/>
<text class="ax" x="11" y="894" textLength="49" lengthAdjust="spacingAndGlyphs">11 Jan 2023</text>
<text class="ax" x="75" y="894" textLength="52" lengthAdjust="spacingAndGlyphs">11 Jan 08:10</text>
<text class="ax" x="139" y="894" textLength="52" lengthAdjust="spacingAndGlyphs">11 Jan 08:50</text>
<text class="ax" x="203" y="894" textLength="52" lengthAdjust="spacingAndGlyphs">11 Jan 09:30</text>
<text class="ax" x="267" y="894" textLength="52" lengthAdjust="spacingAndGlyphs">11 Jan 10:10</text>
<text class="ax" x="331" y="894" textLength="52" lengthAdjust="spacingAndGlyphs">11 Jan 10:50</text>
<text class="ax" x="395" y="894" textLength="52" lengthAdjust="spacingAndGlyphs">11 Jan 11:30</text>
<text class="ax" x="459" y="894" textLength="52" lengthAdjust="spacingAndGlyphs">11 Jan 12:10</text>
<text class="ax" x="523" y="894" textLength="52" lengthAdjust="spacingAndGlyphs">11 Jan 12:50</text>
<text class="ax" x="587" y="894" textLength="52" lengthAdjust="spacingAndGlyphs">11 Jan 13:30</text>
<text class="ax" x="651" y="894" textLength="52" lengthAdjust="spacingAndGlyphs">11 Jan 14:10</text>
<text class="ax" x="715" y="894" textLength="52" lengthAdjust="spacingAndGlyphs">11 Jan 14:50</text>
<text class="ax" x="779" y="894" textLength="52" lengthAdjust="spacingAndGlyphs">11 Jan 15:30</text>
<text class="ax" x="843" y="894" textLength="52" lengthAdjust="spacingAndGlyphs">11 Jan 16:10</text>
<text class="ax" x="907" y="894" textLength="52" lengthAdjust="spacingAndGlyphs">11 Jan 16:50</text>
<text class="ax" x="971" y="894" textLength="52" lengthAdjust="spacingAndGlyphs">11 Jan 17:30</text>
</svg>
</body></html>
